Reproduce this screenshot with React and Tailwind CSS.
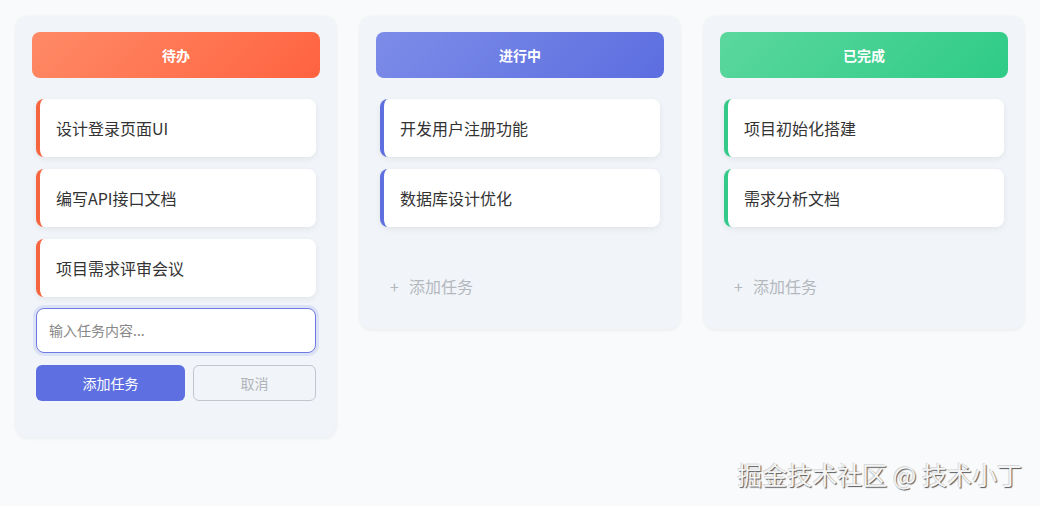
import React from 'react';

const font = { fontFamily: '"Noto Sans CJK SC", "Noto Sans", sans-serif' };

const columns = [
    {
        title: '待办',
        header: 'bg-[linear-gradient(135deg,#ff8a66,#ff6340)]',
        border: 'border-[#f7653f]',
        tasks: ['设计登录页面UI', '编写API接口文档', '项目需求评审会议'],
        adding: true,
    },
    {
        title: '进行中',
        header: 'bg-[linear-gradient(135deg,#7d8ce8,#5c6ee0)]',
        border: 'border-[#5f6fe0]',
        tasks: ['开发用户注册功能', '数据库设计优化'],
    },
    {
        title: '已完成',
        header: 'bg-[linear-gradient(135deg,#5bd79d,#2ecb86)]',
        border: 'border-[#33c98a]',
        tasks: ['项目初始化搭建', '需求分析文档'],
    },
];

function Column({ col }) {
    return (
        <div className="w-[320px] bg-[#f1f4f8] rounded-xl p-4 shadow-[0_1px_4px_rgba(0,0,0,0.07)]">
            {/* Header */}
            <div className={`${col.header} h-[46px] rounded-lg flex items-center justify-center text-white text-[14px] font-bold`}>
                {col.title}
            </div>

            {/* Cards */}
            <div className="mt-[21px] px-1 flex flex-col gap-3">
                {col.tasks.map((t) => (
                    <div
                        key={t}
                        className={`h-[58px] bg-white rounded-lg border-l-4 ${col.border} pl-4 flex items-center text-[16px] text-[#333] shadow-[0_2px_6px_rgba(0,0,0,0.07)]`}
                    >
                        {t}
                    </div>
                ))}
            </div>

            {col.adding ? (
                <div className="px-1 mt-[11px] mb-5">
                    <div className="h-[45px] rounded-lg border border-[#6b7be2] bg-white shadow-[0_0_0_3px_rgba(102,126,234,0.15)] flex items-center px-3">
                        <span className="text-[14px] text-[#888]">输入任务内容...</span>
                    </div>
                    <div className="mt-3 flex gap-2">
                        <button className="w-[149px] h-9 rounded-md bg-[#5d6fe1] text-white text-[14px]">添加任务</button>
                        <button className="flex-1 h-9 rounded-md border border-[#c3c7cd] text-[#b0b4ba] text-[14px]">取消</button>
                    </div>
                </div>
            ) : (
                <div className="mt-[39px] mb-[7px] px-1">
                    <div className="h-10 flex items-center pl-2.5 gap-2.5 text-[16px] text-[#b4b8be]">
                        <span>+</span>
                        <span>添加任务</span>
                    </div>
                </div>
            )}
        </div>
    );
}

export default function App() {
    return (
        <div className="relative min-h-screen bg-[#f8fafc] p-4" style={font}>
            <div className="flex items-start gap-6">
                {columns.map((c) => (
                    <Column key={c.title} col={c} />
                ))}
            </div>

            {/* Watermark */}
            <div className="absolute right-[18px] bottom-[13px] text-[25px] text-[#f4f4f4] [text-shadow:1px_1px_1px_rgba(0,0,0,0.65),-1px_-1px_0_rgba(0,0,0,0.15)]">
                掘金技术社区 @ 技术小丁
            </div>
        </div>
    );
}
